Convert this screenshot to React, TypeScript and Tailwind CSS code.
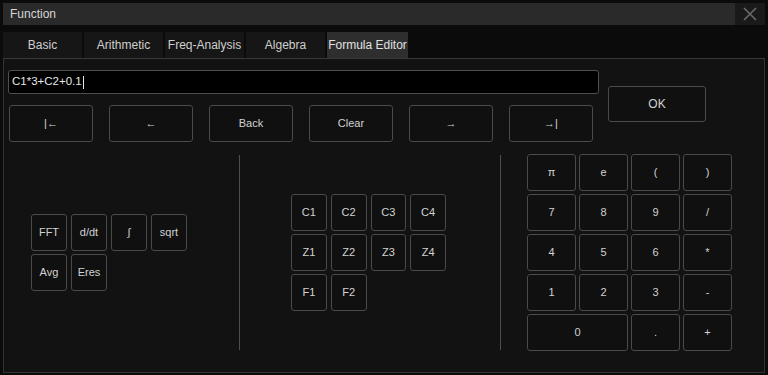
const font = { fontFamily: '"Liberation Sans", Arial, sans-serif' };

const tabs = ['Basic', 'Arithmetic', 'Freq-Analysis', 'Algebra', 'Formula Editor'];
const navKeys = ['|\u2190', '\u2190', 'Back', 'Clear', '\u2192', '\u2192|'];
const funcKeys = ['FFT', 'd/dt', '\u222B', 'sqrt', 'Avg', 'Eres'];
const srcKeys = ['C1', 'C2', 'C3', 'C4', 'Z1', 'Z2', 'Z3', 'Z4', 'F1', 'F2'];
const padKeys = ['\u03C0', 'e', '(', ')', '7', '8', '9', '/', '4', '5', '6', '*', '1', '2', '3', '-'];

function Key({ label, className = '' }: { label: string; className?: string }) {
  return (
    <div
      className={`flex items-center justify-center rounded-[3px] border border-[#4a4a4a] bg-[#101010] text-[11px] text-[#d2d2d2] ${className}`}
    >
      {label}
    </div>
  );
}

export default function App() {
  return (
    <div className="flex h-[375px] w-[768px] flex-col bg-[#0b0b0b] px-[3px] pt-[3px] pb-[2px]" style={font}>
      {/* title bar */}
      <div className="flex h-[22px] shrink-0 items-center bg-[#2a2a2a]">
        <span className="flex-1 pl-[7px] text-[12px] text-[#d6d6d6]">Function</span>
        <div className="flex h-full w-[30px] items-center justify-center bg-[#1a1a1a]">
          <svg width="14" height="14" viewBox="0 0 14 14">
            <path d="M1 1L13 13M13 1L1 13" stroke="#6a6a6a" strokeWidth="1.6" />
          </svg>
        </div>
      </div>

      {/* tabs */}
      <div className="mt-[7px] flex h-[27px] shrink-0 gap-[2px] border-b border-[#383838]">
        {tabs.map((t, i) => (
          <div
            key={t}
            className={`flex w-[79px] items-center justify-center text-[12px] ${
              i === 4 ? 'w-[81px] bg-[#2e2e2e] text-[#e0e0e0]' : 'bg-[#161616] text-[#cfcfcf]'
            }`}
          >
            {t}
          </div>
        ))}
      </div>

      {/* content panel */}
      <div className="flex flex-1 flex-col border-x border-b border-[#333] bg-[#121212]">
        <div className="flex pl-[4px] pt-[11px]">
          <div className="flex w-[591px] flex-col gap-[11px]">
            <div className="flex h-[24px] items-center rounded-[3px] border border-[#4f4f4f] bg-black pl-[3px] text-[11.5px] text-[#e6e6e6]">
              C1*3+C2+0.1
              <span className="ml-px inline-block h-[13px] w-px bg-[#e6e6e6]" />
            </div>
            <div className="flex gap-[16px] pl-px">
              {navKeys.map((k) => (
                <Key key={k} label={k} className="h-[37px] w-[84px]" />
              ))}
            </div>
          </div>
          <Key label="OK" className="ml-[9px] mt-[16px] h-[36px] w-[98px] text-[12px]" />
        </div>

        <div className="mt-[12px] flex h-[196px] items-center">
          <div className="w-[235px] pl-[27px]">
            <div className="grid w-[156px] grid-cols-4 gap-x-[4px] gap-y-[3px]">
              {funcKeys.map((k) => (
                <Key key={k} label={k} className="h-[37px]" />
              ))}
            </div>
          </div>
          <div className="h-[195px] w-px bg-[#4d4d4d]" />
          <div className="w-[260px] pl-[51px]">
            <div className="grid w-[155px] grid-cols-4 gap-x-[4px] gap-y-[3px]">
              {srcKeys.map((k) => (
                <Key key={k} label={k} className="h-[37px]" />
              ))}
            </div>
          </div>
          <div className="h-[195px] w-px bg-[#4d4d4d]" />
          <div className="pl-[26px]">
            <div className="grid w-[205px] grid-cols-4 gap-x-[3px] gap-y-[3px]">
              {padKeys.map((k) => (
                <Key key={k} label={k} className="h-[37px]" />
              ))}
              <Key label="0" className="col-span-2 h-[37px]" />
              <Key label="." className="h-[37px]" />
              <Key label="+" className="h-[37px]" />
            </div>
          </div>
        </div>
      </div>
    </div>
  );
}
